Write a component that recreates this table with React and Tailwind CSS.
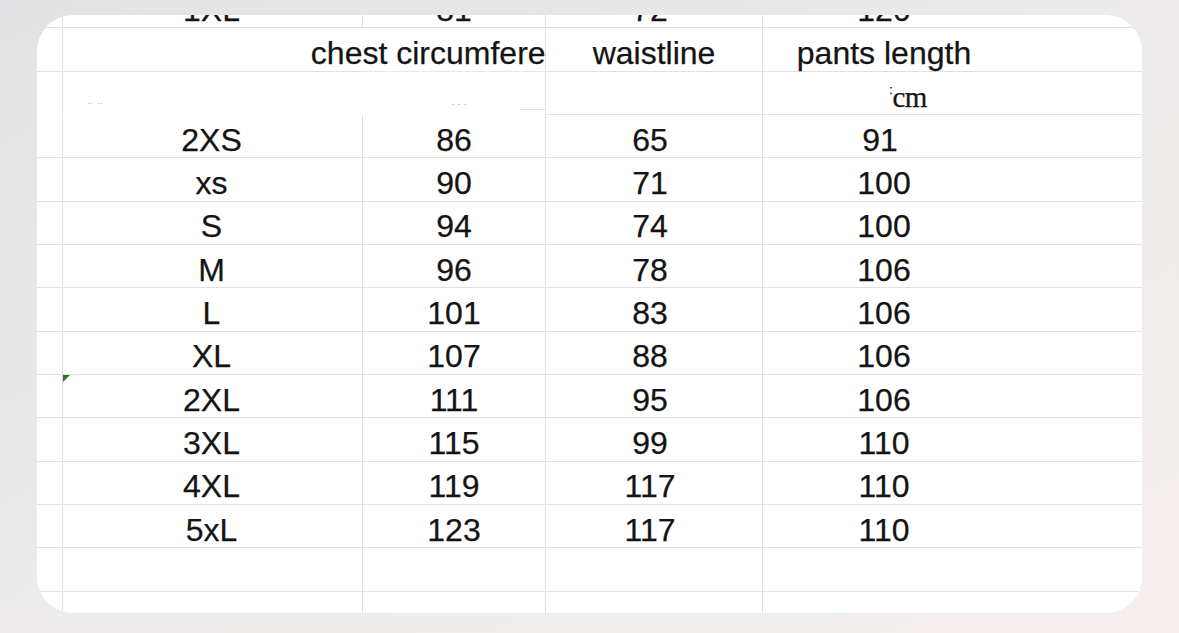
import React from "react";

const sizes = [
  ["2XS", "86", "65", "91"],
  ["xs", "90", "71", "100"],
  ["S", "94", "74", "100"],
  ["M", "96", "78", "106"],
  ["L", "101", "83", "106"],
  ["XL", "107", "88", "106"],
  ["2XL", "111", "95", "106"],
  ["3XL", "115", "99", "110"],
  ["4XL", "119", "117", "110"],
  ["5xL", "123", "117", "110"],
];

const cols = "grid grid-cols-[26px_300px_183px_217px_242px_1fr] h-[43.33px]";
const cell = "flex items-center justify-center pt-[7px] border-b border-[#e0e0e0] whitespace-nowrap";

function Row({ values, flag }) {
  return (
    <div className={cols}>
      <div className={`${cell} border-r`} />
      {values.map((v, i) => (
        <div
          key={i}
          className={`${cell} relative ${i < 3 ? "border-r" : ""} ${i === 0 ? "pr-[2px]" : ""} ${i === 2 ? "pr-[8px]" : ""} ${i === 3 && v.length < 3 ? "pr-[8px]" : ""}`}
        >
          {flag && i === 0 && (
            <span className="absolute left-0 top-0 w-0 h-0 border-t-[7px] border-r-[7px] border-t-[#1f7a2e] border-r-transparent" />
          )}
          {v}
        </div>
      ))}
      <div className={cell} />
    </div>
  );
}

export default function App() {
  return (
    <div className="h-[633px] w-full bg-gradient-to-br from-[#e2e2e4] via-[#edebeb] to-[#f5eeee] pt-[15px] font-['Liberation_Sans',Arial,sans-serif] text-[32px] leading-none text-[#141414] [-webkit-text-stroke:0.25px_#141414]">
      <div className="mx-auto w-[1105px] h-[598px] rounded-[36px] bg-white overflow-hidden">
        <div className="-mt-[30px]">
          {/* top row, mostly scrolled away */}
          <Row values={["1XL", "81", "72", "120"]} />

          {/* header */}
          <div className={cols}>
            <div className={`${cell} border-r`} />
            <div className={cell} />
            <div className={`${cell} border-r [clip-path:inset(0_0_0_-120px)]`}>
              <span>chest circumference</span>
            </div>
            <div className={`${cell} border-r`}>waistline</div>
            <div className={cell}>pants length</div>
            <div className={cell} />
          </div>

          {/* unit row */}
          <div className={cols}>
            <div className={`${cell} border-r border-b-transparent`} />
            <div className={`${cell} border-b-transparent justify-start pl-[24px]`}>
              <span className="text-[10px] text-[#c8c8c8] tracking-[1px] mt-[10px] [-webkit-text-stroke:0]">‥ ‥</span>
            </div>
            <div className={`${cell} border-r border-b-0 flex-col items-stretch justify-between pt-0`}>
              <span className="text-[10px] text-[#d0d0d0] text-center mt-[16px] pl-[10px] [-webkit-text-stroke:0]">‐ ‐ ‐</span>
              <span className="block h-px ml-[157px] bg-[#e0e0e0]" />
            </div>
            <div className={`${cell} border-r`} />
            <div className={`${cell} justify-start pl-[126px] pt-[10px]`}>
              <span className="font-['Liberation_Serif',serif] text-[29px] tracking-[-0.5px]">
                <span className="text-[14px] align-top text-[#444]">ː</span>cm
              </span>
            </div>
            <div className={cell} />
          </div>

          {sizes.map((r, i) => (
            <Row key={r[0]} values={r} flag={i === 6} />
          ))}

          <Row values={["", "", "", ""]} />
          <Row values={["", "", "", ""]} />
        </div>
      </div>
    </div>
  );
}
